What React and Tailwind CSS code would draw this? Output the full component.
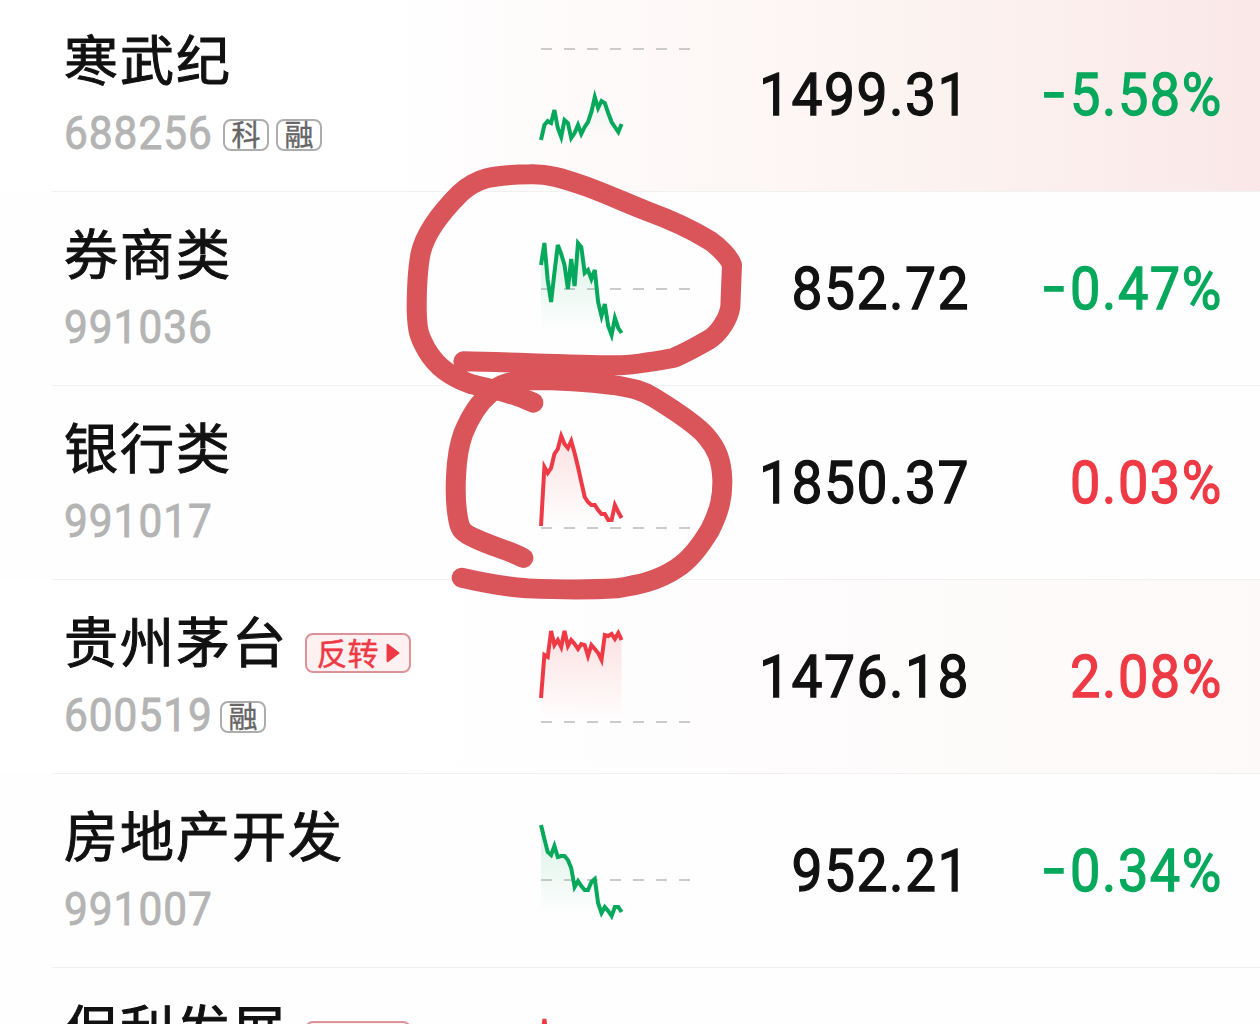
import React from 'react'

const GREEN = '#06a85c'
const RED = '#ee3a45'

// trend: one y value per sample, inside a 194px high row
const stocks = [
  {
    name: '寒武纪', code: '688256', tags: ['科', '融'], price: '1499.31', change: '-5.58%', up: false,
    bg: 'bg-linear-to-r from-white from-30% via-[#fcf3f1] via-74% to-[#fae8e8]',
    base: 51,
    trend: [142, 127, 123, 125, 112, 130, 139, 122, 125, 140, 135, 127, 136, 129, 124, 114, 99, 110, 103, 105, 115, 124, 129, 134, 126],
  },
  {
    name: '券商类', code: '991036', tags: [], price: '852.72', change: '-0.47%', up: false,
    bg: '',
    base: 97,
    trend: [73, 51, 88, 110, 81, 53, 62, 73, 97, 67, 94, 51, 55, 81, 78, 87, 78, 110, 124, 112, 134, 143, 126, 136, 141],
  },
  {
    name: '银行类', code: '991017', tags: [], price: '1850.37', change: '0.03%', up: true,
    bg: '',
    base: 142,
    trend: [140, 81, 87, 82, 68, 63, 50, 58, 62, 55, 67, 81, 96, 111, 116, 119, 119, 124, 128, 128, 134, 134, 119, 126, 132],
  },
  {
    name: '贵州茅台', code: '600519', tags: ['融'], flag: '反转', price: '1476.18', change: '2.08%', up: true,
    bg: 'bg-linear-to-r from-white from-30% via-[#fefcfc] via-65% to-[#fdf9f8]',
    base: 142,
    trend: [118, 75, 77, 51, 65, 60, 67, 51, 66, 60, 64, 69, 64, 65, 76, 65, 69, 73, 80, 55, 56, 54, 59, 53, 60],
  },
  {
    name: '房地产开发', code: '991007', tags: [], price: '952.21', change: '-0.34%', up: false,
    bg: '',
    base: 106,
    trend: [51, 65, 78, 81, 72, 83, 82, 82, 86, 94, 113, 107, 112, 116, 116, 108, 105, 129, 139, 133, 137, 142, 133, 133, 138],
  },
  {
    name: '保利发展', code: '', tags: [], flag: '反转', price: '', change: '', up: true,
    bg: '',
    base: 142,
    trend: [78, 51, 78, 90, 84, 92, 98, 90, 95, 100],
  },
]

function Sparkline({ id, trend, base, up }) {
  const color = up ? RED : GREEN
  const step = 3.36
  const points = trend.map((y, i) => `${(1 + i * step).toFixed(1)},${y}`).join(' ')
  const lastX = (1 + (trend.length - 1) * step).toFixed(1)

  return (
    <svg className="block h-[193px] w-[152px] shrink-0 overflow-visible" viewBox="0 0 152 193" fill="none">
      <defs>
        <linearGradient id={id} gradientUnits="userSpaceOnUse" x1="0" y1="50" x2="0" y2="140">
          <stop offset="0" stopColor={color} stopOpacity="0.15" />
          <stop offset="1" stopColor={color} stopOpacity="0" />
        </linearGradient>
      </defs>
      <path d={`M1 ${base}H151`} stroke="#cbcbcb" strokeWidth="2" strokeDasharray="11 12" />
      <polygon points={`1,142 ${points} ${lastX},142`} fill={`url(#${id})`} />
      <polyline points={points} stroke={color} strokeWidth="4" strokeMiterlimit="4" />
    </svg>
  )
}

function Tag({ children }) {
  return (
    <span className="flex h-8 w-[46px] items-center justify-center rounded-[8px] border-2 border-[#adadad] pb-[4px] text-[29px] leading-none text-[#666] [-webkit-text-stroke:0.4px_#666]">
      {children}
    </span>
  )
}

function Flag({ children }) {
  return (
    <span className="mt-[25px] ml-[19px] flex h-10 w-[106px] items-center justify-center gap-[7px] rounded-[8px] border-2 border-[#dc949a] bg-[#fff0f1] text-[31px] leading-none text-[#ee3a45] [-webkit-text-stroke:0.4px_#ee3a45]">
      <span className="-mt-[3px]">{children}</span>
      <svg className="h-[20px] w-[14px]" viewBox="0 0 13 18">
        <path d="M1.5 1.5 11.5 9 1.5 16.5Z" fill={RED} stroke={RED} strokeWidth="2" strokeLinejoin="round" />
      </svg>
    </span>
  )
}

function Change({ value, up }) {
  const negative = value.startsWith('-')
  return (
    <div className={`w-[253px] shrink-0 origin-right scale-x-[0.9] pt-[61px] text-right font-[Roboto] text-[60px] leading-[72px] tracking-[1.8px] ${up ? 'text-[#ee3a45] [-webkit-text-stroke:1.3px_#ee3a45]' : 'text-[#06a85c] [-webkit-text-stroke:1.3px_#06a85c]'}`}>
      {negative && <span className="mr-[4px] inline-block origin-right -translate-y-[2px] scale-x-[1.4]">-</span>}
      {negative ? value.slice(1) : value}
    </div>
  )
}

function Row({ stock, index }) {
  return (
    <div className={`flex h-[194px] ${stock.bg}`}>
      <div className="ml-[52px] flex flex-1 border-b border-[#f1f1f1]">
        <div className="w-[488px] shrink-0 pl-3">
          <div className="mt-[28px] flex h-[64px] items-center">
            <h2 className="text-[54px] leading-[64px] tracking-[2px] whitespace-nowrap text-[#111] [-webkit-text-stroke:1px_#111]">{stock.name}</h2>
            {stock.flag && (
              <div className="-ml-[2px]">
                <Flag>{stock.flag}</Flag>
              </div>
            )}
          </div>
          <div className="mt-[19px] flex h-[48px] items-center">
            {stock.code && (
              <span className="w-[150px] origin-left scale-x-[0.92] font-[Roboto] text-[46px] leading-[48px] tracking-[1.1px] text-[#b4b4b4] [-webkit-text-stroke:0.9px_#b4b4b4]">{stock.code}</span>
            )}
            <div className={`mt-[4px] flex gap-[7px] ${stock.tags.length > 1 ? 'ml-[9px]' : 'ml-[6px]'}`}>
              {stock.tags.map((tag) => (
                <Tag key={tag}>{tag}</Tag>
              ))}
            </div>
          </div>
        </div>
        <Sparkline id={`trend-${index}`} trend={stock.trend} base={stock.base} up={stock.up} />
        <div className="w-[278px] shrink-0 origin-right scale-x-[0.92] pt-[61px] text-right font-[Roboto] text-[60px] leading-[72px] tracking-[1.6px] text-[#111] [-webkit-text-stroke:1.3px_#111]">
          {stock.price}
        </div>
        <Change value={stock.change} up={stock.up} />
      </div>
    </div>
  )
}

// Hand-drawn marker loops over the two sector charts
function Marker() {
  return (
    <svg
      className="pointer-events-none absolute top-[150px] left-[400px] h-[460px] w-[360px]"
      viewBox="0 0 1080 1380"
      fill="none"
      stroke="#da5559"
      strokeWidth="60"
      strokeLinecap="round"
      strokeLinejoin="round"
    >
      <path d="M400 758C340 730 290 720 215 703C150 680 110 650 80 600C55 555 52 540 50 480C50 420 52 360 62 310C75 250 120 190 180 130C230 85 270 75 390 73C440 71 480 82 560 110C640 140 680 160 740 183C820 212 870 235 930 272C960 293 990 325 996 345L991 470C985 510 955 550 930 567C890 590 850 612 820 624C760 635 700 646 650 646C500 645 350 637 190 634" />
      <path d="M370 1224C320 1198 290 1195 225 1165C190 1150 180 1140 175 1110C165 1060 167 1000 168 980C170 930 175 890 190 850C210 800 240 755 270 730C300 700 340 692 390 690C480 690 560 695 640 705C700 715 730 722 760 742C830 785 890 825 920 860C950 895 965 930 967 990C968 1040 960 1080 930 1140C900 1190 870 1230 830 1255C770 1295 710 1305 650 1315C540 1322 450 1318 380 1315C310 1310 260 1300 185 1283" />
    </svg>
  )
}

function App() {
  return (
    <main className="relative h-[1024px] w-[1260px] overflow-hidden bg-[#fefefe] font-['Noto_Sans_CJK_SC',sans-serif]">
      <div className="-mt-[2px]">
        {stocks.map((stock, index) => (
          <Row key={stock.name} stock={stock} index={index} />
        ))}
      </div>
      <Marker />
    </main>
  )
}

export default App
